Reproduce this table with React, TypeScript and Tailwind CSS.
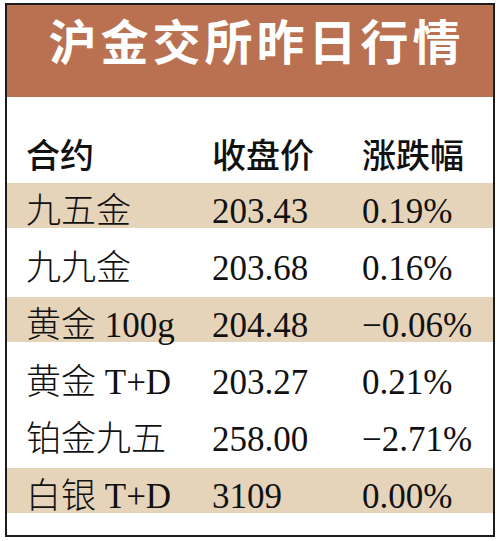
export default function App() {
  const rows = [
    { name: "九五金", price: "203.43", change: "0.19%", shaded: true },
    { name: "九九金", price: "203.68", change: "0.16%", shaded: false },
    { name: "黄金 100g", price: "204.48", change: "−0.06%", shaded: true },
    { name: "黄金 T+D", price: "203.27", change: "0.21%", shaded: false },
    { name: "铂金九五", price: "258.00", change: "−2.71%", shaded: false },
    { name: "白银 T+D", price: "3109", change: "0.00%", shaded: true },
  ];

  return (
    <div className="w-[500px] h-[541px] bg-white pt-[3px] pl-[5px]">
      <div className="w-[490px] h-[534px] border-2 border-[#1c1c1c] bg-white">
        {/* Title bar */}
        <div className="h-[92px] bg-[#b97151] pt-[10px] pl-[13px] text-center">
          <h1
            className="text-[48px] leading-[48px] font-bold text-white tracking-[4px] whitespace-nowrap"
            style={{ fontFamily: '"Noto Sans CJK SC", sans-serif' }}
          >
            沪金交所昨日行情
          </h1>
        </div>

        {/* Column headings */}
        <div
          className="h-[86px] flex items-end pb-[12px] pl-[19px] text-[34px] leading-[34px] font-medium text-[#111]"
          style={{ fontFamily: '"Noto Sans CJK SC", sans-serif' }}
        >
          <span className="w-[186px]">合约</span>
          <span className="w-[150px]">收盘价</span>
          <span>涨跌幅</span>
        </div>

        {/* Data rows */}
        {rows.map((row) => (
          <div
            key={row.name}
            className={`h-[57px] flex items-center pl-[19px] text-[35px] leading-none font-light text-[#111] ${
              row.shaded
                ? "bg-[linear-gradient(to_bottom,#e5d4b9_45px,transparent_45px)]"
                : ""
            }`}
            style={{ fontFamily: '"Liberation Serif", "Noto Sans CJK SC", serif' }}
          >
            <span className="w-[186px] whitespace-nowrap">{row.name}</span>
            <span className="w-[150px]">{row.price}</span>
            <span>{row.change}</span>
          </div>
        ))}
      </div>
    </div>
  );
}
